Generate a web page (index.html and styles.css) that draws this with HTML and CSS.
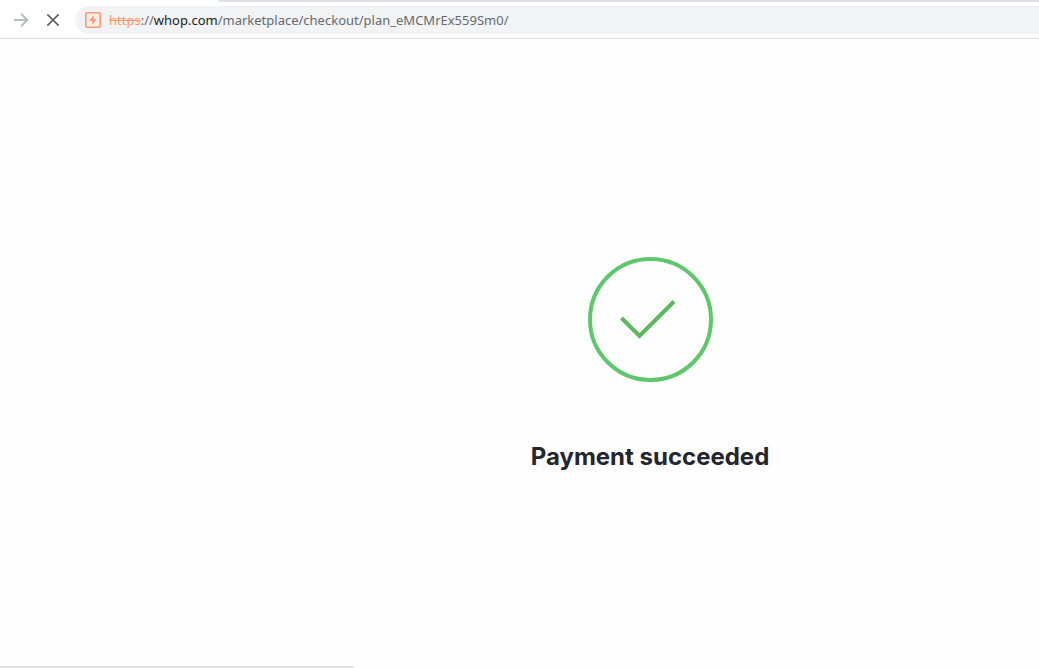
FILE: index.html
```html
<!DOCTYPE html>
<html lang="en">
<head>
    <meta charset="UTF-8">
    <meta name="viewport" content="width=device-width, initial-scale=1.0">
    <title>Payment succeeded</title>
    <link rel="stylesheet" href="styles.css">
</head>
<body>
    <header class="browser-bar">
        <div class="tab-strip"></div>
        <div class="toolbar">
            <button class="nav-button forward" type="button" aria-label="Forward">
                <svg width="16" height="16" viewBox="0 0 16 16" fill="none" stroke="currentColor" stroke-width="2">
                    <path d="M1 8h13M8 1.7L14.3 8 8 14.3"/>
                </svg>
            </button>
            <button class="nav-button" type="button" aria-label="Stop loading">
                <svg width="16" height="16" viewBox="0 0 16 16" fill="none" stroke="currentColor" stroke-width="1.7">
                    <path d="M2.3 2.3l11.4 11.4M13.7 2.3L2.3 13.7"/>
                </svg>
            </button>
            <div class="address">
                <svg class="site-icon" width="18" height="18" viewBox="0 0 18 18" aria-hidden="true">
                    <rect x="1.8" y="1.8" width="14.4" height="14.4" rx="1.5" fill="#f6eeeb" stroke="#ff976d" stroke-width="1.6"/>
                    <path d="M9.8 4v4h3L8.3 14V9.8H5.2z" fill="#ff976d"/>
                </svg>
                <div class="url" role="textbox" aria-label="Address" contenteditable="true" spellcheck="false"><s>https</s>://<span class="host">whop.com</span>/marketplace/checkout/plan_eMCMrEx559Sm0/</div>
            </div>
        </div>
    </header>

    <main class="page">
        <svg class="success-icon" width="126" height="126" viewBox="0 0 126 126" fill="none" stroke-width="4" aria-hidden="true">
            <circle cx="63.5" cy="62.5" r="60.5" stroke="#5fc76b"/>
            <path d="M34.5 61L52.5 79L87 44.5" stroke="#5cb85c"/>
        </svg>
        <h1>Payment succeeded</h1>
    </main>

    <div class="status-bubble"></div>
</body>
</html>
```

FILE: styles.css
```css
* {
    box-sizing: border-box;
}
body {
    margin: 0;
    min-height: 100vh;
    display: flex;
    flex-direction: column;
    background: #fefefe;
    color: #25252d;
    font-family: Inter, sans-serif;
}
.browser-bar {
    background: white;
    border-bottom: 1px solid #d9d9d9;
}
.tab-strip {
    height: 2px;
    margin-left: 218px;
    background: #dee1e6;
    border-bottom-left-radius: 2px;
}
.toolbar {
    display: flex;
    align-items: center;
    padding: 4px 0 4px 5px;
}
.nav-button {
    display: flex;
    align-items: center;
    justify-content: center;
    width: 32px;
    height: 28px;
    padding: 0;
    border: none;
    background: none;
    color: #5f6368;
}
.forward {
    color: #bbbcbe;
}
.address {
    display: flex;
    flex: 1;
    align-items: center;
    gap: 7px;
    height: 28px;
    margin-left: 6px;
    padding-left: 9px;
    border-radius: 14px 0 0 14px;
    background: #f1f3f4;
}
.url {
    flex: 1;
    font-family: "Noto Sans", sans-serif;
    font-size: 13px;
    line-height: 20px;
    white-space: nowrap;
    color: #66696e;
    outline: none;
}
.url s {
    color: #ff976d;
}
.host {
    color: #202124;
}
.page {
    flex: 1;
    display: flex;
    flex-direction: column;
    align-items: center;
    padding-top: 218px;
    padding-left: 261px;
}
.success-icon {
    display: block;
}
h1 {
    margin: 58px 0 0;
    font-size: 24px;
    line-height: 32px;
    font-weight: 700;
}
.status-bubble {
    width: 354px;
    height: 2px;
    border-top-right-radius: 2px;
    background: #dee1e6;
}
```
